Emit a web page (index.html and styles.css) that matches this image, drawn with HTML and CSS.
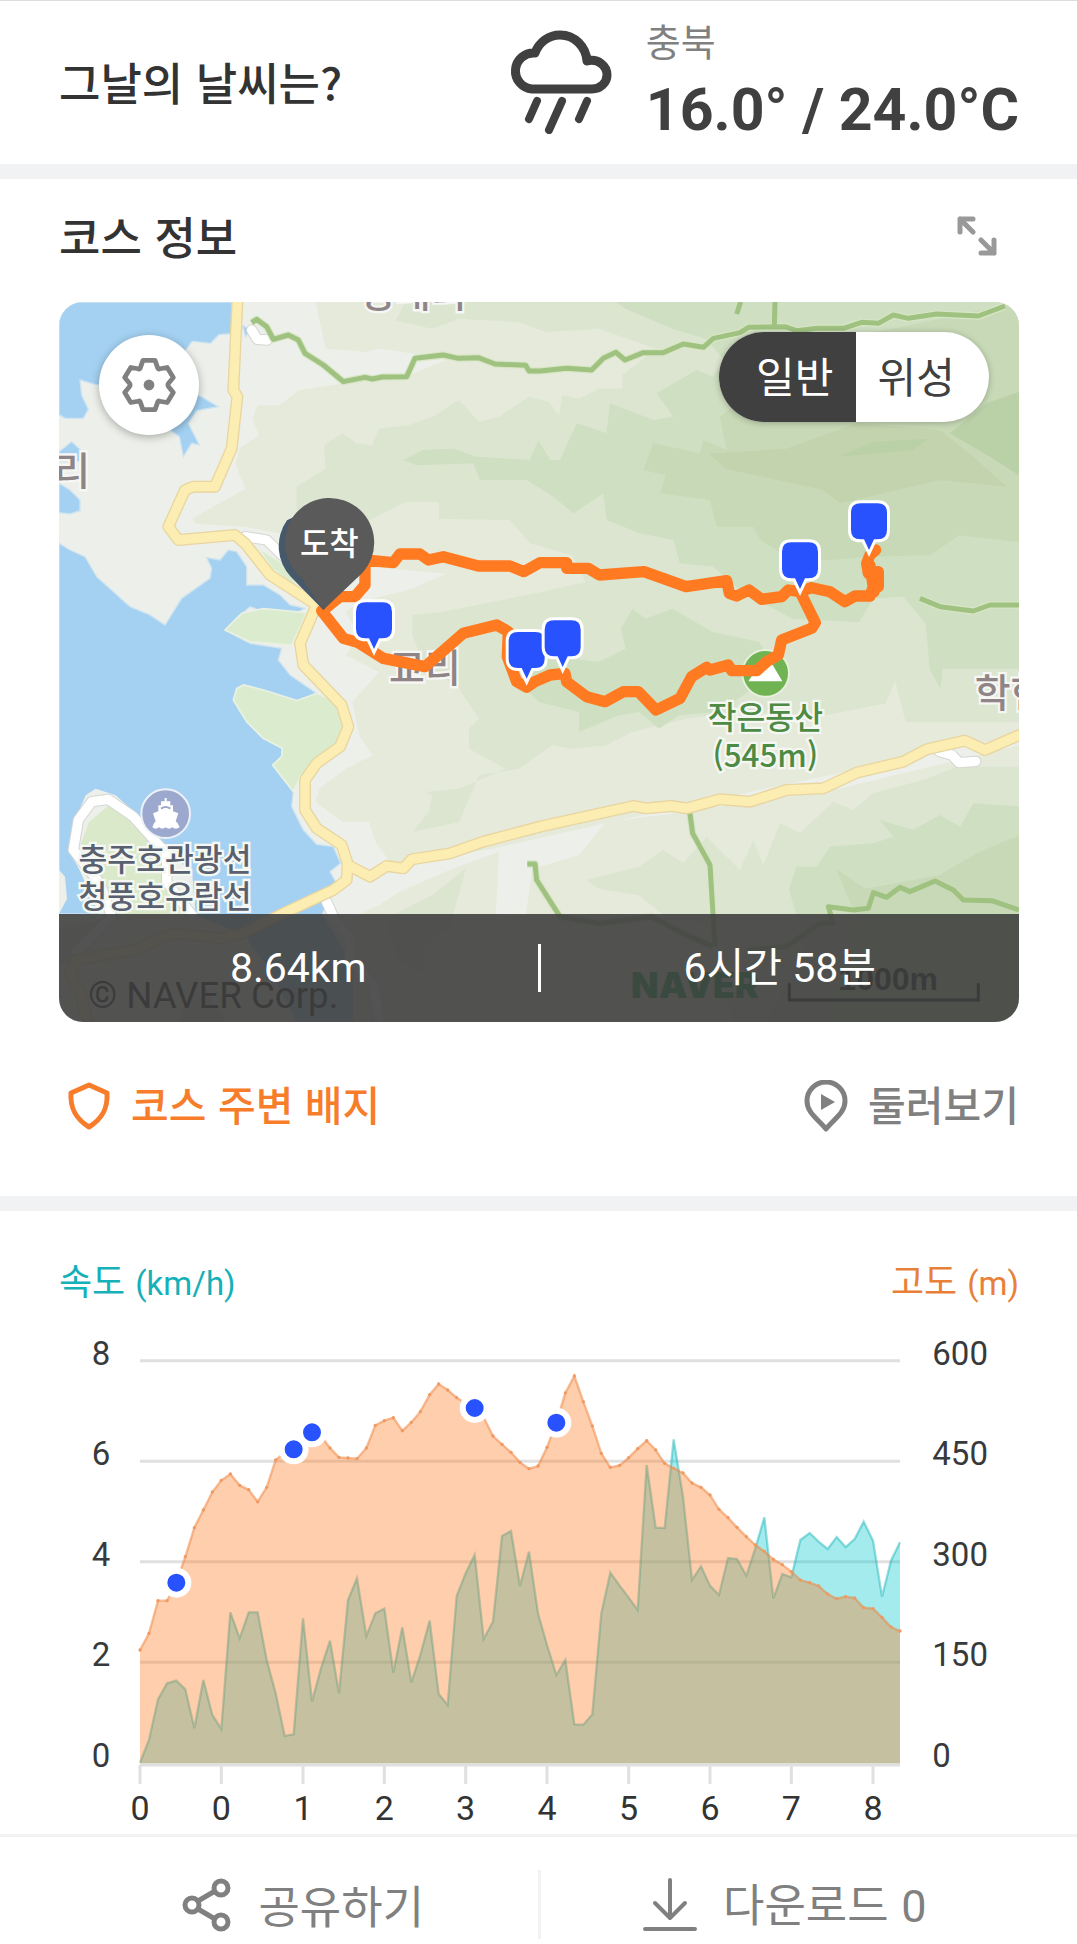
FILE: index.html
```html
<!DOCTYPE html>
<html lang="ko">
<head>
<meta charset="utf-8">
<meta name="viewport" content="width=device-width, initial-scale=1">
<title>코스 정보</title>
<link rel="stylesheet" href="styles.css">
</head>
<body>
<main class="page">
  <section class="weather">
    <h2 class="title">그날의 날씨는?</h2>
    <div class="weather-now">
      <svg class="weather-icon" viewBox="0 0 102 104" fill="none" stroke="#404040" stroke-width="9" stroke-linecap="round" stroke-linejoin="round" aria-hidden="true">
        <path d="M22 59A18 18 0 0 1 25 23C29 12 39 5 50 5C65 5 76 17 77 31C88 28 97 36 97 45C97 53 90 59 82 59Z"/>
        <path d="M27 71L19 89M52 71L39 100M77 71L69 89" stroke-width="8"/>
      </svg>
      <div class="weather-text">
        <p class="region">충북</p>
        <p class="temps">16.0° / 24.0°C</p>
      </div>
    </div>
  </section>

  <section class="course">
    <header class="course-head">
      <h2 class="title">코스 정보</h2>
      <button class="icon-button" type="button" aria-label="지도 크게 보기">
        <svg class="expand-icon" viewBox="0 0 40 40" fill="none" stroke="#999" stroke-width="5" stroke-linecap="round" stroke-linejoin="round" aria-hidden="true">
          <path d="M16 16L3 3M16 3H3V16M24 24L37 37M24 37H37V24"/>
        </svg>
      </button>
    </header>

    <div class="map">
      <svg class="map-canvas" viewBox="0 0 2880 2160" role="img" aria-label="등산 코스 지도">
        <rect width="2880" height="2160" fill="#edf0ea"/>
        <g fill="#e5eadb">
          <path d="M770 0L800 140L920 150L960 140L1100 160L1160 175L1060 215L880 240L720 265L660 310L595 310L580 350L600 400L540 440L530 490L560 560L470 610L400 650L410 665L560 675L690 700L820 790L1000 800L1160 815L1060 860L900 900L860 930L900 1000L860 1060L960 1110L880 1200L900 1300L940 1360L860 1400L780 1460L770 1500L850 1560L930 1560L950 1620L1000 1690L1300 1640L1880 1510L2880 1300V0Z"/>
          <path d="M1640 1560L1880 1530L2080 1500L2340 1460L2880 1330V2160H830L850 1860L960 1810L1020 1770L1180 1700L1320 1650L1310 1850L1400 1840L1420 1700L1560 1660Z"/>
        </g>
        <g fill="#dbe5cf">
          <path d="M713 554L800 500L795 430L850 394L893 424L940 430L960 380L1050 370L1130 340L1200 294L1260 360L1320 344L1410 284L1470 300L1500 340L1510 280L1560 290L1620 260L1690 260L1690 220L1790 140L1620 80L1460 90L1380 60L1200 50L1120 80L1010 55L1040 0H2880V1260L2540 1260L2508 1134L2480 1204L2300 1240L2040 1230L1880 1250L1720 1290L1640 1330L1540 1340L1480 1330L1380 1400L1260 1420L1200 1560L1060 1590L1110 1530L1120 1480L1100 1470L1200 1460L1340 1400L1230 1340L1230 1280L1260 1250L1200 1160L1130 1110L1100 1100L1060 1000L1060 940L1150 930L1300 900L1450 870L1580 840L1540 760L1413 724L1353 654L1140 650L1140 600L1040 600L920 660L770 660L713 620Z"/>
          <path d="M1583 1734L1740 1694L1813 1644L1873 1684L1943 1604L2043 1704L2083 1614L2113 1689L2163 1564L2223 1594L2323 1499L2383 1524L2443 1474L2593 1434L2693 1394H2880V2160H2020L1980 1900L1900 1850L1840 1860L1740 1780L1620 1760Z"/>
          <path d="M980 1850L1120 1780L1220 1700L1170 1880L1090 1930L1100 2010L1020 1980Z"/>
        </g>
        <g fill="#cfdfc1">
          <path d="M1033 474L1093 444L1183 440L1253 464L1413 474L1438 414L1473 474L1503 474L1553 364L1643 394L1653 304L1783 354L1843 344L1793 274L1913 204L1963 224L1993 170L1940 110L1840 80L1700 20L1670 0H2880V1100H2650L2645 1160L2613 1104L2600 964L2533 884L2443 890L2400 960L2200 950L2050 870L1963 794L1863 784L1843 714L1743 694L1643 654L1633 574L1543 634L1483 584L1403 534L1263 534L1243 484L1073 490Z"/>
          <path d="M1686 980L1720 920L1760 950L1840 920L1960 990L2100 1020L2140 1080L2080 1160L1980 1230L1860 1240L1800 1280L1740 1230L1680 1240L1560 1290L1560 1230L1440 1200L1360 1120L1460 1060L1620 1080L1700 1040Z"/>
          <path d="M2213 1694L2273 1694L2313 1634L2443 1624L2503 1604L2463 1554L2563 1584L2643 1539L2703 1574L2743 1504L2880 1514V2160H2120L2240 1940L2190 1760Z"/>
        </g>
        <g fill="#c7d9b6">
          <path d="M1753 504L1783 424L1923 454L1933 414L2003 444L1983 344L2063 280L2080 180L2160 120L2400 100L2600 60L2880 0V720L2700 700L2613 760L2423 764L2313 774L2203 774L2103 714L2083 674L1973 674L1953 594L1803 574L1820 520Z"/>
          <path d="M2330 1700L2420 1760L2640 1720L2760 1650L2880 1600V2160H2300L2400 1860Z"/>
        </g>
        <path fill="#c2d3ad" d="M1950 455L2183 440L2393 364L2643 384L2743 464L2843 554L2643 534L2343 604L2293 564L2000 500Z"/>
        <path fill="#bad0a7" d="M2673 394L2783 304L2880 270V520L2793 464ZM2340 464L2440 420L2610 410L2560 445L2430 455Z"/>

        <g fill="#a4d1f2" stroke="#cfe4ef" stroke-width="4">
          <path d="M0 0H518V95L480 98L455 124L400 118L300 250L110 248L63 234L68 280L88 322L73 349H18L0 338Z"/>
          <path d="M418 279L478 314L413 326L388 364L421 429L398 424L373 464L361 404L333 384L300 300Z"/>
          <path d="M0 449L38 419L65 444V479H0ZM0 544L33 564L63 594V626L33 636L0 632Z"/>
          <path d="M550 70L575 82L560 105Z"/>
          <path d="M0 724L33 744L78 764L113 824L213 914L273 939L318 969L368 889L453 829L458 799L443 767L483 774L508 744L533 749L563 794V849H613L663 879L693 909L738 919L713 932L613 929L573 914L533 949L498 984L573 1024L668 1039L658 1074L693 1119L773 1174L713 1196L613 1164L553 1149L523 1194L563 1259L613 1309L670 1339L668 1364L641 1389L703 1469L698 1514L733 1584L773 1627L823 1634L845 1684L813 1709L833 1744L790 1836L830 1900L883 2004V2160H713L630 2000L553 1904L403 1836H0Z"/>
        </g>
        <g fill="#dbebcd" stroke="#e9f1e2" stroke-width="5">
          <path d="M498 984L548 934L613 920L743 932L698 1029L573 1019Z"/>
          <path d="M523 1194L533 1160L553 1149L613 1164L713 1196L773 1174L843 1204L863 1264L843 1324L723 1424L703 1469L641 1389L668 1364L670 1339L613 1309L563 1259Z"/>
          <path d="M600 740L680 790L720 860L640 800Z"/>
        </g>
        <path fill="#edf0ea" d="M0 1704L18 1724L24 1790L0 1836ZM80 1480L110 1460L170 1480L260 1560L330 1640L400 1720L410 1840L560 1900L700 2160H0V1880L120 1836L60 1700L30 1650L50 1550Z"/>
        <path fill="#d9e9c9" d="M150 1510L230 1570L300 1640L340 1740L400 1836H160L80 1720L60 1640L90 1560ZM0 1880L140 1850L80 1960L0 1990ZM360 2160L390 2080L440 2060L500 2160Z"/>

        <g fill="none" stroke-linejoin="round" stroke-linecap="round">
          <g stroke="#d5d6d4" stroke-width="34">
            <path d="M578 84L595 112L625 114M558 704L623 714L680 770"/>
            <path d="M323 1650L303 1634L223 1544L148 1492L98 1499L58 1554L43 1644L123 1744L158 1844L53 1950M323 1650L323 1740L400 1840M803 1800L823 1844L873 1914V1974L943 2044L960 2150"/>
            <path d="M2640 1348L2680 1360L2700 1382L2750 1378"/>
          </g>
          <g stroke="#fff" stroke-width="28">
            <path d="M578 84L595 112L625 114M558 704L623 714L680 770"/>
            <path d="M323 1650L303 1634L223 1544L148 1492L98 1499L58 1554L43 1644L123 1744L158 1844L53 1950M323 1650L323 1740L400 1840M803 1800L823 1844L873 1914V1974L943 2044L960 2150"/>
            <path d="M2640 1348L2680 1360L2700 1382L2750 1378"/>
          </g>
        </g>

        <g fill="none" stroke-linejoin="round">
          <g stroke="#d9e6c6" stroke-width="22">
            <path d="M578 62L593 52L623 74L643 112L688 99L718 114L738 154L793 189L853 239L918 226L940 231L970 225L1043 224L1068 169L1153 159L1198 169L1258 167L1308 186L1400 190L1410 207L1443 207L1523 199L1598 204L1633 169L1671 151L1698 174L1753 152H1813L1873 126L1933 136L1963 109L2043 92L2068 76L2178 74L2213 86L2273 79H2353L2408 61L2458 64L2503 39L2548 49L2633 36L2758 42L2838 12"/>
            <path d="M2583 889L2643 914L2743 927L2793 909H2880M1891 1522L1901 1594L1953 1689L1968 1934M1405 1686H1428L1433 1734L1503 1844L1623 1864L1778 1844L1893 1904L1963 1934"/>
          </g>
          <g stroke="#9fc280" stroke-width="15">
            <path d="M578 62L593 52L623 74L643 112L688 99L718 114L738 154L793 189L853 239L918 226L940 231L970 225L1043 224L1068 169L1153 159L1198 169L1258 167L1308 186L1400 190L1410 207L1443 207L1523 199L1598 204L1633 169L1671 151L1698 174L1753 152H1813L1873 126L1933 136L1963 109L2043 92L2068 76L2178 74L2213 86L2273 79H2353L2408 61L2458 64L2503 39L2548 49L2633 36L2758 42L2838 12"/>
            <path d="M2148 0L2146 74M2045 0L2033 36M2583 889L2643 914L2743 927L2793 909H2880M1891 1522L1901 1594L1953 1689L1968 1934M1405 1686H1428L1433 1734L1503 1844L1623 1864L1778 1844L1893 1904L1963 1934"/>
            <path d="M2880 1824L2798 1796L2713 1794L2683 1764L2628 1737L2553 1769L2523 1756L2483 1786L2443 1772L2428 1819L2383 1824L2308 1814L2323 1864H2283L2183 1934L2063 1944"/>
          </g>
          <g stroke="#e8d5a0" stroke-width="36">
            <path d="M536 -20L523 264L535 284L518 439L468 554H403L378 564L328 674L358 714L528 699L558 724L633 819L773 909L723 1024L733 1089L848 1209L868 1274L843 1334L773 1384L738 1434V1524L773 1579L848 1629L866 1684L863 1734L823 1764L673 1834L553 1894L483 1909L343 1894L223 1944L53 1974L33 2014L63 2074L93 2180"/>
            <path d="M866 1689L933 1724L983 1692L1033 1699L1058 1672L1173 1654L1273 1619L1443 1574L1723 1512L1763 1519L1838 1512L1883 1519L1983 1492L2073 1499L2183 1464L2293 1459L2393 1412L2533 1379L2603 1342L2718 1316L2778 1344L2900 1291"/>
          </g>
          <g stroke="#fcedb2" stroke-width="28">
            <path d="M536 -20L523 264L535 284L518 439L468 554H403L378 564L328 674L358 714L528 699L558 724L633 819L773 909L723 1024L733 1089L848 1209L868 1274L843 1334L773 1384L738 1434V1524L773 1579L848 1629L866 1684L863 1734L823 1764L673 1834L553 1894L483 1909L343 1894L223 1944L53 1974L33 2014L63 2074L93 2180"/>
            <path d="M866 1689L933 1724L983 1692L1033 1699L1058 1672L1173 1654L1273 1619L1443 1574L1723 1512L1763 1519L1838 1512L1883 1519L1983 1492L2073 1499L2183 1464L2293 1459L2393 1412L2533 1379L2603 1342L2718 1316L2778 1344L2900 1291"/>
          </g>
        </g>

        <g class="place">
          <text x="900" y="14">성내리</text>
          <text x="-14" y="548">리</text>
          <text x="990" y="1141">교리</text>
          <text x="2747" y="1216">학현</text>
        </g>
        <g class="poi poi-ferry">
          <circle cx="320" cy="1535" r="73" fill="#9ca8cd" stroke="#edf1f7" stroke-width="6"/>
          <path fill="#fff" d="M317 1488H323V1498H334V1510H342V1528L358 1534L350 1558L356 1564L362 1576Q350 1584 340 1576Q330 1584 320 1576Q310 1584 300 1576Q290 1584 280 1576L285 1564L290 1558L282 1534L298 1528V1510H306V1498H317Z"/>
          <path fill="none" stroke="#9ca8cd" stroke-width="6" d="M306 1520Q320 1510 334 1520"/>
          <text x="318" y="1706">충주호관광선</text>
          <text x="318" y="1819">청풍호유람선</text>
        </g>
        <g class="poi poi-peak">
          <circle cx="2120" cy="1114" r="70" fill="#6fb352" stroke="#e6f0dd" stroke-width="6"/>
          <path fill="#fff" d="M2068 1138L2108 1078L2124 1096L2138 1084L2170 1138Z"/>
          <text x="2119" y="1281">작은동산</text>
          <text x="2119" y="1395">(545m)</text>
        </g>
        <text class="copyright" x="88" y="2119">© NAVER Corp.</text>
        <text class="naver" x="1716" y="2089">NAVER</text>
        <text class="scale" x="2338" y="2064">1000m</text>
        <path fill="none" stroke="#111" stroke-width="9" d="M2191 2044V2094H2758V2044"/>

        <g fill="none" stroke="#ff7a20" stroke-width="34" stroke-linejoin="round" stroke-linecap="round">
          <path d="M793 924L843 884H888L918 849V774L1003 782L1023 756H1083L1108 774L1153 764L1258 792H1353L1395 809L1443 782H1523V799H1588L1621 819L1755 809L1881 854L2003 836L2011 874L2033 882L2070 864L2108 892L2168 884L2188 864L2223 869L2258 857L2313 869L2358 899L2388 882H2433L2443 854H2458V809L2428 814L2423 784L2433 759L2450 744M2433 790L2445 870"/>
          <path d="M788 926L853 1009L898 1022L973 1069L1098 1094L1213 994L1313 969L1348 989L1345 1064L1373 1139L1403 1156L1428 1139L1473 1119L1518 1114L1523 1139L1583 1184L1638 1199L1693 1169H1738L1791 1224L1863 1189L1898 1124L1943 1096L1953 1104L2008 1089L2018 1106H2093L2123 1079L2158 1059L2168 1014L2258 979L2269 962L2228 879"/>
        </g>

        <path fill="#45596b" d="M696 825A134 134 0 0 1 684 655L800 600L880 820L793 924Z"/>
        <path fill="#5a5a5a" d="M793 924L726 825A134 134 0 1 1 909 814Z"/>
        <text class="finish" x="811" y="758">도착</text>

        <defs>
          <path id="pin" d="M-26-54H26Q54-54 54-26V26Q54 54 26 54H15L0 86L-15 54H-26Q-54 54-54 26V-26Q-54-54-26-54Z" fill="#2952ff" stroke="#fff" stroke-width="18" paint-order="stroke"/>
        </defs>
        <use href="#pin" x="2430" y="658"/>
        <use href="#pin" x="2223" y="775"/>
        <use href="#pin" x="945" y="955"/>
        <use href="#pin" x="1403" y="1044"/>
        <use href="#pin" x="1511" y="1009"/>
      </svg>

      <button class="map-settings" type="button" aria-label="지도 설정">
        <svg viewBox="0 0 160 160" fill="none" stroke="#808080" stroke-width="14" stroke-linejoin="round" aria-hidden="true">
          <path d="M62 7H98L106 30Q108 34 112 32L134 28L152 58L138 75Q134 80 138 85L152 102L134 132L112 128Q108 126 106 130L98 153H62L54 130Q52 126 48 128L26 132L8 102L22 85Q26 80 22 75L8 58L26 28L48 32Q52 34 54 30Z"/>
          <circle cx="80" cy="80" r="16" fill="#808080" stroke="none"/>
        </svg>
      </button>
      <div class="map-type">
        <button class="type type-on" type="button" aria-pressed="true">일반</button>
        <button class="type" type="button" aria-pressed="false">위성</button>
      </div>
      <div class="summary">
        <p class="figure">8.64km</p>
        <p class="figure">6시간 58분</p>
      </div>
    </div>

    <div class="course-links">
      <a class="link link-badge" href="#badges">
        <svg class="shield-icon" viewBox="0 0 44 50" fill="none" stroke="#f77d2b" stroke-width="5" stroke-linejoin="round" aria-hidden="true">
          <path d="M22 4L40 12C41 28 35 38 22 46C9 38 3 28 4 12Z"/>
        </svg>
        <span class="link-text">코스 주변 배지</span>
      </a>
      <a class="link" href="#explore">
        <svg class="pin-icon" viewBox="0 0 44 52" fill="none" stroke="#808080" stroke-width="5" stroke-linejoin="round" aria-hidden="true">
          <path d="M22 49C14 39 3 33 3 21A19 19 0 0 1 41 21C41 33 30 39 22 49Z"/>
          <path d="M17 14L31 22L17 30Z" fill="#808080" stroke="none"/>
        </svg>
        <span class="link-text">둘러보기</span>
      </a>
    </div>
  </section>

  <section class="profile">
    <header class="profile-head">
      <h3 class="axis-name speed-name">속도 <span class="unit">(km/h)</span></h3>
      <h3 class="axis-name height-name">고도 <span class="unit">(m)</span></h3>
    </header>
    <svg class="chart" id="chart" viewBox="0 0 2880 1512" role="img" aria-label="거리별 속도와 고도"></svg>
  </section>

  <footer class="actions">
    <button class="action" type="button">
      <svg class="share-icon" viewBox="0 0 50 54" fill="none" stroke="#808080" stroke-width="5" aria-hidden="true">
        <circle cx="10" cy="27" r="7"/><circle cx="39" cy="10" r="7"/><circle cx="39" cy="44" r="7"/>
        <path d="M16 23L33 13M16 31L33 41"/>
      </svg>
      공유하기
    </button>
    <button class="action" type="button">
      <svg class="download-icon" viewBox="0 0 54 54" fill="none" stroke="#808080" stroke-width="4" stroke-linecap="round" stroke-linejoin="round" aria-hidden="true">
        <path d="M27 2V40M12 25L27 40L42 25M2 51H52"/>
      </svg>
      <span>다운로드 <span class="count">0</span></span>
    </button>
  </footer>
</main>
<script src="chart.js"></script>
</body>
</html>
```
FILE: styles.css
```css
* {
  box-sizing: border-box;
}

body,
h2,
h3,
p {
  margin: 0;
}

body {
  background: #fff;
  color: #333;
  font-family: "Noto Sans CJK KR", sans-serif;
}

button {
  padding: 0;
  border: 0;
  background: none;
  color: inherit;
  font: inherit;
}

svg {
  display: block;
  flex: none;
}

.title {
  font-size: 45px;
  font-weight: 500;
  line-height: 60px;
}

.weather {
  display: flex;
  align-items: center;
  justify-content: space-between;
  height: 164px;
  padding: 0 58px 2px 59px;
  border-top: 1px solid #ddd;
}

.weather-now {
  display: flex;
  align-items: center;
  gap: 34px;
}

.weather-icon {
  width: 102px;
  height: 104px;
}

.weather-text {
  display: grid;
  gap: 12px;
}

.region {
  color: #808080;
  font-size: 38px;
  line-height: 44px;
}

.temps {
  color: #404040;
  font-family: Roboto, sans-serif;
  font-size: 59px;
  font-weight: 700;
  line-height: 72px;
  white-space: nowrap;
}

.course {
  padding: 0 58px 0 59px;
  border-top: 15px solid #f0f2f4;
}

.course-head {
  display: flex;
  align-items: center;
  justify-content: space-between;
  height: 123px;
  padding: 0 22px 10px 0;
}

.expand-icon {
  width: 40px;
  height: 40px;
}

.map {
  position: relative;
  overflow: hidden;
  border-radius: 24px;
}

.map-canvas {
  width: 100%;
  height: auto;
}

.place {
  fill: #8f8587;
  stroke: #f6f6f4;
  stroke-width: 14px;
  paint-order: stroke;
  font-size: 117px;
  font-weight: 500;
}

.poi {
  font-size: 94px;
  font-weight: 500;
  text-anchor: middle;
}

.poi text {
  stroke: #f4f7f2;
  stroke-width: 14px;
  paint-order: stroke;
}

.poi-ferry text {
  fill: #59606f;
}

.poi-peak text {
  fill: #4d8a43;
}

.finish {
  fill: #fff;
  font-size: 96px;
  font-weight: 500;
  text-anchor: middle;
}

.copyright {
  fill: #111;
  font-family: Roboto, sans-serif;
  font-size: 110px;
}

.naver {
  fill: #00a040;
  font-family: Inter, sans-serif;
  font-size: 108px;
  font-weight: 900;
}

.scale {
  fill: #111;
  font-family: "Liberation Sans", sans-serif;
  font-size: 96px;
  font-weight: 700;
}

.map-settings {
  position: absolute;
  top: 33px;
  left: 40px;
  display: grid;
  place-items: center;
  width: 100px;
  height: 100px;
  border-radius: 50%;
  background: #fff;
  box-shadow: 0 2px 8px rgba(0, 0, 0, 0.3);
}

.map-settings svg {
  width: 54px;
  height: 54px;
}

.map-type {
  position: absolute;
  top: 30px;
  right: 30px;
  display: flex;
  overflow: hidden;
  width: 270px;
  height: 90px;
  border-radius: 45px;
  background: #fff;
  box-shadow: 0 1px 6px rgba(0, 0, 0, 0.25);
}

.type {
  flex: 1;
  padding: 0 12px 4px 0;
  color: #404040;
  font-size: 42px;
  line-height: 60px;
}

.type-on {
  padding: 0 0 4px 15px;
  background: #404040;
  color: #fff;
}

.summary {
  position: absolute;
  right: 0;
  bottom: 0;
  left: 0;
  display: flex;
  align-items: center;
  height: 108px;
  background: rgba(64, 64, 64, 0.9);
  color: #fff;
}

.figure {
  flex: 1;
  font-family: Roboto, "Noto Sans CJK KR", sans-serif;
  font-size: 41px;
  line-height: 48px;
  text-align: center;
}

.figure + .figure {
  border-left: 3px solid #fff;
}

.course-links {
  display: flex;
  align-items: center;
  justify-content: space-between;
  height: 174px;
  padding-bottom: 6px;
}

.link {
  display: flex;
  align-items: center;
  gap: 20px;
  color: #808080;
  font-size: 41px;
  font-weight: 500;
  line-height: 60px;
  text-decoration: none;
}

.link-text {
  padding-bottom: 6px;
}

.link-badge {
  padding-left: 8px;
  color: #f77d2b;
}

.shield-icon {
  width: 44px;
  height: 50px;
}

.pin-icon {
  width: 44px;
  height: 52px;
}

.profile {
  border-top: 15px solid #f0f2f4;
  padding: 0 58px 0 59px;
}

.profile-head {
  display: flex;
  justify-content: space-between;
  height: 119px;
  padding-top: 44px;
}

.axis-name {
  font-size: 36px;
  font-weight: 400;
  line-height: 48px;
}

.unit {
  font-family: Roboto, sans-serif;
  font-size: 33px;
}

.speed-name {
  color: #16b0b8;
}

.height-name {
  color: #e8803a;
}

.chart {
  width: 100%;
  height: auto;
}

.gridline {
  stroke: #e0e0e0;
  stroke-width: 9px;
}

.axis {
  fill: none;
  stroke: #e0e0e0;
  stroke-width: 9px;
}

.axis-label {
  fill: #373a3c;
  font-family: Roboto, sans-serif;
  font-size: 99px;
}

.tick-label {
  fill: #333;
  font-family: Roboto, sans-serif;
  font-size: 102px;
  text-anchor: middle;
}

.area-speed {
  fill: rgba(0, 200, 205, 0.36);
}

.area-height {
  fill: rgba(255, 122, 31, 0.37);
}

.line-speed {
  fill: none;
  stroke: rgba(0, 170, 175, 0.4);
  stroke-width: 7px;
}

.line-height {
  fill: none;
  stroke: rgba(240, 130, 60, 0.5);
  stroke-width: 7px;
}

.sample {
  fill: #ef9a62;
}

.stop {
  fill: #2952ff;
  stroke: #fff;
  stroke-width: 18px;
}

.actions {
  display: flex;
  height: 110px;
  padding: 33px 58px 5px 59px;
  border-top: 3px solid #f2f2f2;
}

.action {
  display: flex;
  flex: 1;
  align-items: center;
  justify-content: center;
  gap: 26px;
  padding-left: 10px;
  color: #808080;
  font-size: 45px;
  line-height: 60px;
  white-space: nowrap;
}

.action + .action {
  border-left: 3px solid #f2f2f2;
}

.count {
  font-family: Roboto, sans-serif;
  font-size: 45px;
}

.share-icon {
  width: 50px;
  height: 54px;
}

.download-icon {
  width: 54px;
  height: 54px;
}
```
FILE: chart.js
```js
// Samples along the track, as heights in the chart's own units.
const height = [960, 910, 812, 812, 758, 680, 593, 540, 486, 451, 432, 466, 479, 515, 472, 390, 368, 358, 330, 307, 318, 354, 382, 384, 386, 354, 286, 272, 263, 302, 277, 245, 194, 162, 180, 203, 220, 234, 262, 318, 343, 367, 397, 416, 408, 352, 278, 189, 138, 215, 288, 370, 412, 406, 383, 356, 332, 360, 400, 415, 429, 459, 472, 495, 538, 563, 592, 620, 645, 664, 688, 704, 725, 750, 758, 768, 792, 806, 800, 804, 833, 836, 862, 891, 903];
const speed = [1298, 1230, 1108, 1060, 1052, 1078, 1195, 1050, 1155, 1197, 847, 925, 847, 847, 990, 1090, 1218, 1213, 865, 1115, 1015, 932, 1090, 810, 745, 918, 850, 836, 1028, 892, 1057, 975, 872, 1092, 1125, 798, 730, 675, 927, 875, 618, 603, 768, 665, 850, 945, 1035, 990, 1183, 1184, 1153, 850, 728, 767, 803, 840, 405, 593, 594, 328, 500, 750, 709, 767, 795, 684, 687, 737, 655, 562, 805, 732, 742, 630, 609, 635, 657, 621, 651, 627, 575, 632, 800, 692, 637];
const stops = [4, 17, 19, 37, 46];

const left = 243;
const right = 2523;
const base = 1300;
const step = (right - left) / (height.length - 1);
const chart = document.getElementById("chart");

function add(name, attrs, text) {
  const node = document.createElementNS("http://www.w3.org/2000/svg", name);
  for (const key in attrs) node.setAttribute(key, attrs[key]);
  if (text !== undefined) node.textContent = text;
  chart.appendChild(node);
}

const x = (i) => Math.round(left + i * step);
const points = (list) => list.map((y, i) => x(i) + "," + y).join(" ");
const area = (list) => `${left},${base} ${points(list)} ${right},${base}`;

[[92, "8", "600"], [394, "6", "450"], [695, "4", "300"], [997, "2", "150"], [1300, "0", "0"]].forEach(([y, a, b]) => {
  if (y < base) add("line", { class: "gridline", x1: left, x2: right, y1: y, y2: y });
  add("text", { class: "axis-label", x: 98, y: y + 12 }, a);
  add("text", { class: "axis-label", x: 2620, y: y + 12 }, b);
});

add("path", { class: "axis", d: `M${left} 1305H${right}` });
["0", "0", "1", "2", "3", "4", "5", "6", "7", "8"].forEach((label, i) => {
  add("path", { class: "axis", d: `M${x(i * 9)} 1305V1362` });
  add("text", { class: "tick-label", x: x(i * 9), y: 1469 }, label);
});

add("polygon", { class: "area-speed", points: area(speed) });
add("polyline", { class: "line-speed", points: points(speed) });
add("polygon", { class: "area-height", points: area(height) });
add("polyline", { class: "line-height", points: points(height) });
height.forEach((y, i) => add("circle", { class: "sample", cx: x(i), cy: y, r: 5 }));
stops.forEach((i) => add("circle", { class: "stop", cx: x(i), cy: height[i], r: 36 }));
```
